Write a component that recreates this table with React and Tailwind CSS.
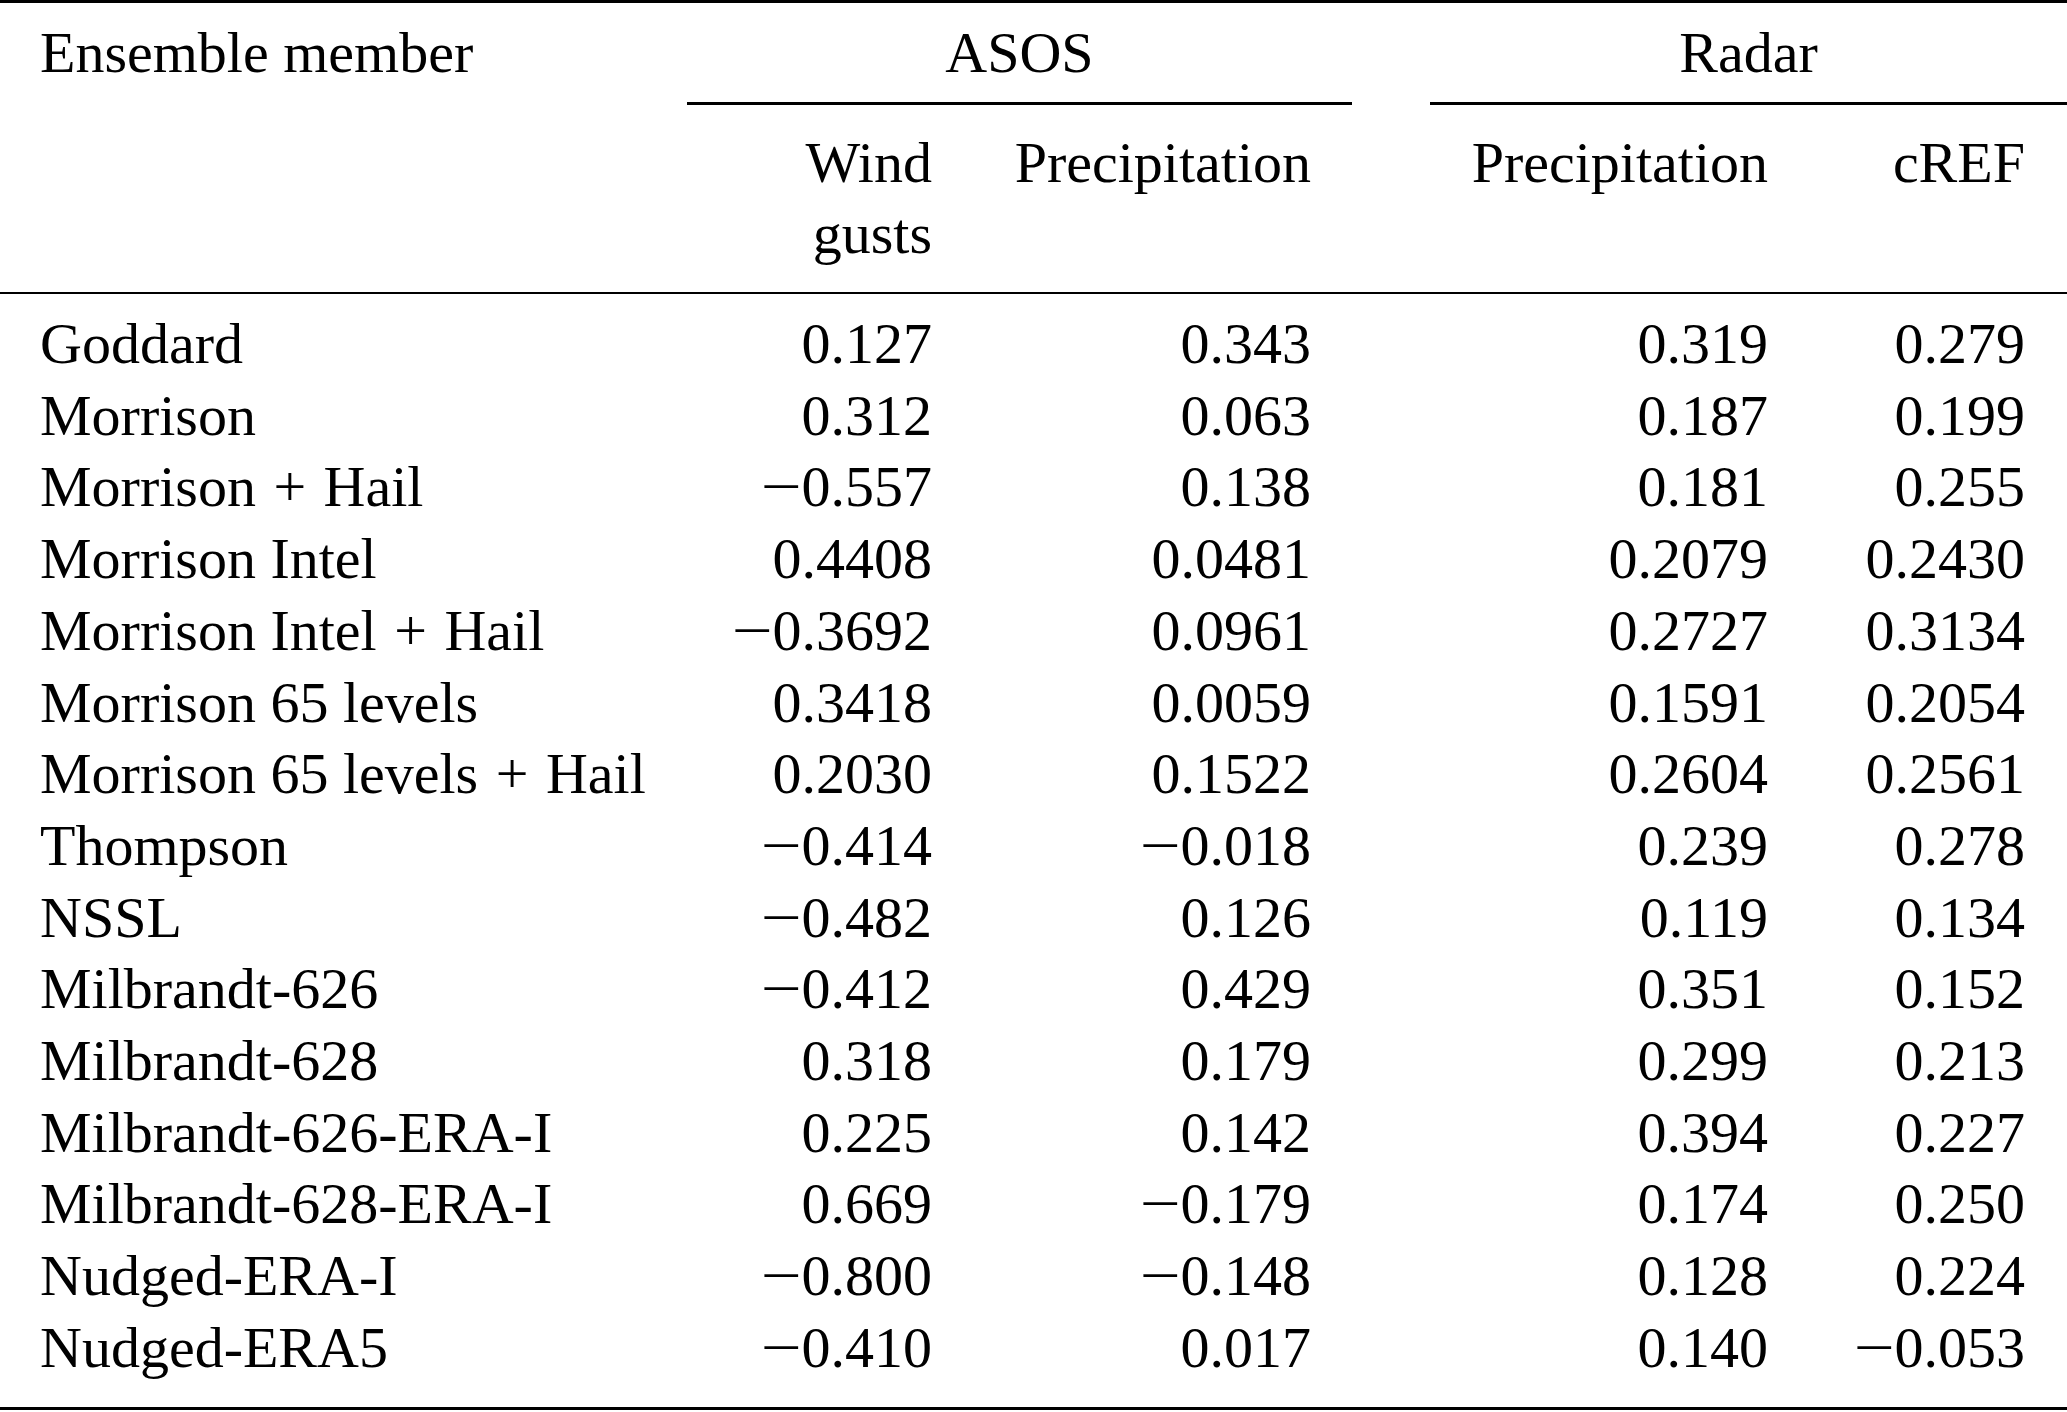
const rows = [
  ['Goddard', '0.127', '0.343', '0.319', '0.279'],
  ['Morrison', '0.312', '0.063', '0.187', '0.199'],
  ['Morrison + Hail', '−0.557', '0.138', '0.181', '0.255'],
  ['Morrison Intel', '0.4408', '0.0481', '0.2079', '0.2430'],
  ['Morrison Intel + Hail', '−0.3692', '0.0961', '0.2727', '0.3134'],
  ['Morrison 65 levels', '0.3418', '0.0059', '0.1591', '0.2054'],
  ['Morrison 65 levels + Hail', '0.2030', '0.1522', '0.2604', '0.2561'],
  ['Thompson', '−0.414', '−0.018', '0.239', '0.278'],
  ['NSSL', '−0.482', '0.126', '0.119', '0.134'],
  ['Milbrandt-626', '−0.412', '0.429', '0.351', '0.152'],
  ['Milbrandt-628', '0.318', '0.179', '0.299', '0.213'],
  ['Milbrandt-626-ERA-I', '0.225', '0.142', '0.394', '0.227'],
  ['Milbrandt-628-ERA-I', '0.669', '−0.179', '0.174', '0.250'],
  ['Nudged-ERA-I', '−0.800', '−0.148', '0.128', '0.224'],
  ['Nudged-ERA5', '−0.410', '0.017', '0.140', '−0.053'],
]

const grid = 'grid grid-cols-[687px_265px_400px_78px_378px_259px]'

// label with a slightly roomier "+" like the typeset original
function Label({ text }) {
  const parts = text.split(' + ')
  if (parts.length === 1) return text
  return (
    <>
      {parts[0]}
      <span className="mx-[3px]"> + </span>
      {parts[1]}
    </>
  )
}

// numbers: widen the minus sign a little
function Num({ v }) {
  if (!v.startsWith('−')) return v
  return (
    <>
      <span className="inline-block scale-x-[1.25] origin-right">−</span>
      {v.slice(1)}
    </>
  )
}

export default function App() {
  return (
    <div className="w-[2067px] h-[1412px] bg-white text-black font-['Liberation_Serif','Times_New_Roman',serif] text-[58px] leading-[71.7px] overflow-hidden">
      <div className="border-t-[3px] border-black">
        {/* group header */}
        <div className={grid}>
          <div className="pl-[40px] pt-[13.6px]">Ensemble member</div>
          <div className="col-span-2 pt-[13.6px] pb-[13.7px] text-center border-b-[3px] border-black">ASOS</div>
          <div />
          <div className="col-span-2 pt-[13.6px] pb-[13.7px] text-center border-b-[3px] border-black">Radar</div>
        </div>

        {/* sub header */}
        <div className={`${grid} border-b-[2px] border-black`}>
          <div />
          <div className="pt-[22px] pb-[23px] pr-[20px] text-right leading-[71px]">
            Wind<br />gusts
          </div>
          <div className="pt-[22px] pr-[41px] text-right leading-[71px]">Precipitation</div>
          <div />
          <div className="pt-[22px] pr-[40px] text-right leading-[71px]">Precipitation</div>
          <div className="pt-[22px] pr-[42px] text-right leading-[71px]">cREF</div>
        </div>

        {/* body */}
        <div className="pt-[14px] pb-[23.5px] border-b-[3px] border-black">
          {rows.map((r) => (
            <div key={r[0]} className={grid}>
              <div className="pl-[40px] whitespace-nowrap"><Label text={r[0]} /></div>
              <div className="pr-[20px] text-right"><Num v={r[1]} /></div>
              <div className="pr-[41px] text-right"><Num v={r[2]} /></div>
              <div />
              <div className="pr-[40px] text-right"><Num v={r[3]} /></div>
              <div className="pr-[42px] text-right"><Num v={r[4]} /></div>
            </div>
          ))}
        </div>
      </div>
    </div>
  )
}
